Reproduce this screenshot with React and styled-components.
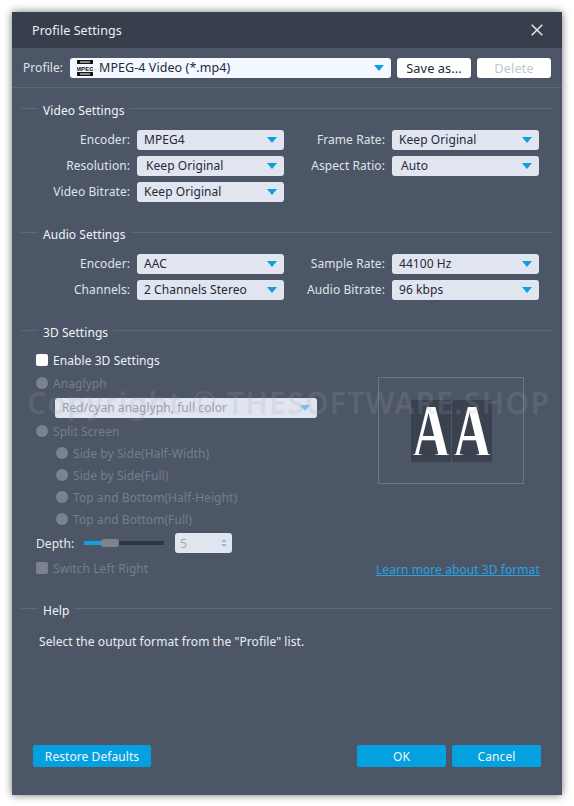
import React from "react";
import styled, { createGlobalStyle } from "styled-components";

const Global = createGlobalStyle`
  html, body { margin: 0; padding: 0; background: #fff; }
  body { font-family: "Noto Sans", Tahoma, sans-serif; font-size: 12px; letter-spacing: 0.07px; }
`;

const Page = styled.div`
  width: 574px; height: 806px; padding: 12px; box-sizing: border-box; position: relative; overflow: hidden;
`;
const Win = styled.div`
  width: 550px; height: 783px; background: #4d5667; color: #e9edf3;
  display: flex; flex-direction: column;
  box-shadow: 0 0 8px rgba(0,0,0,.55);
`;
const TitleBar = styled.div`
  height: 36px; flex: none; background: #373e4c; display: flex; align-items: center; justify-content: space-between;
  padding: 0 20px; font-size: 12.5px; color: #eef1f5;
`;
const CloseBtn = styled.svg`
  width: 12px; height: 12px; display: block; margin-right: -1px;
`;
const ProfileRow = styled.div`
  height: 40px; flex: none; box-sizing: border-box; padding: 10px 11px 0 11px; display: flex; align-items: flex-start;
  border-bottom: 1px solid #5d6676;
`;
const ProfileLabel = styled.div`
  width: 47px; height: 20px; line-height: 20px; color: #dfe3ea;
`;
const Sel = styled.div`
  box-sizing: border-box; height: 20px; width: ${p => p.$w || 147}px; border-radius: 3px;
  background: ${p => p.$bg || "#e1e5f0"}; display: flex; align-items: center;
  padding: 0 7px 0 ${p => p.$pad || 7}px; line-height: 20px;
  flex: none; font-size: ${p => p.$fs || 12}px;
`;
const DisabledSel = styled(Sel)`
  margin: 4px 0 0 19px;
`;
const SelText = styled.span`
  flex: 1; white-space: nowrap; color: ${p => p.$off ? "#9a9fac" : "#23293a"};
`;
const Arrow = styled.i`
  width: 0; height: 0; border-left: 5px solid transparent; border-right: 5px solid transparent;
  border-top: 6px solid ${p => p.$off ? "#74c4ee" : "#0c9fe2"}; flex: none;
`;
const PlainBtn = styled.div`
  width: 74px; height: 20px; margin-left: 6px; border-radius: 3px; background: #fff; font-size: 12.8px;
  color: ${p => p.$off ? "#c3c6cc" : "#23293a"}; text-align: center; line-height: 20px; flex: none;
`;
const FilmIcon = styled.svg`
  width: 16px; height: 16px; margin-right: 6px; flex: none; display: block;
`;
const Legend = styled.div`
  display: flex; align-items: flex-start; height: 20px; margin: ${p => p.$mt}px 9px 0 9px; color: #f0f3f7;
  line-height: 20px;
`;
const LegendRule = styled.span`
  display: block; height: 1px; background: #5f6878; margin-top: 7px;
  ${p => p.$short ? "width: 17px; margin-right: 5px;" : "flex: 1; margin-left: 5px;"}
`;
const FormGrid = styled.div`
  display: grid; grid-template-columns: 116px 147px 108px 147px; row-gap: 6px;
  margin: 9px 0 0 9px; align-items: center;
`;
const FieldLabel = styled.div`
  text-align: right; padding-right: 7px; line-height: 20px; height: 20px; color: #dfe3ea; white-space: nowrap;
`;
const ThreeD = styled.div`
  display: flex; margin-left: 24px; height: 258px;
`;
const LeftCol = styled.div`
  width: 342px; flex: none; display: flex; flex-direction: column;
`;
const OptRow = styled.div`
  display: flex; align-items: center; height: 22px; margin-left: ${p => p.$in ? 20 : 0}px;
  margin-top: ${p => p.$mt || 0}px; color: ${p => p.$off ? "#757d8c" : "#eef1f5"};
`;
const Check = styled.span`
  width: 12px; height: 12px; border-radius: 2px; background: ${p => p.$off ? "#7b8290" : "#fff"}; margin-right: 5px; flex: none;
`;
const Radio = styled.span`
  width: 12px; height: 12px; border-radius: 50%; background: #7b8290; margin-right: 5px; flex: none;
`;
const DepthRow = styled.div`
  display: flex; align-items: center; height: 20px; margin-top: 3px; color: #e6eaef;
`;
const DepthLabel = styled.span`
  width: 48px; flex: none;
`;
const Track = styled.div`
  width: 80px; height: 4px; background: #2f3542; position: relative; flex: none;
`;
const TrackFill = styled.div`
  height: 4px; background: #0fa0e2; width: 20px;
`;
const Thumb = styled.div`
  position: absolute; left: 17px; top: -2px; width: 18px; height: 8px; border-radius: 3px; background: #7d838f;
`;
const Spin = styled.div`
  width: 57px; height: 20px; margin-left: 11px; box-sizing: border-box; background: #e1e5f0; border-radius: 3px;
  display: flex; align-items: center; justify-content: space-between; padding: 0 5px; color: #a2a7b2; flex: none;
`;
const SpinArrows = styled.span`
  display: flex; flex-direction: column; gap: 2px;
`;
const SpinUp = styled.i`
  width: 0; height: 0; border-left: 3px solid transparent; border-right: 3px solid transparent; border-bottom: 3px solid #74c4ee;
`;
const SpinDown = styled.i`
  width: 0; height: 0; border-left: 3px solid transparent; border-right: 3px solid transparent; border-top: 3px solid #74c4ee;
`;
const RightCol = styled.div`
  flex: 1; display: flex; flex-direction: column; align-items: flex-start;
`;
const Preview = styled.div`
  width: 146px; height: 107px; box-sizing: border-box; border: 1px solid #6b7586; margin-top: 34px;
  display: flex; align-items: center; justify-content: center; gap: 1px;
`;
const Tile = styled.div`
  width: 40px; height: 62px; border-radius: 2px; background: #3a414f; overflow: hidden; position: relative;
`;
const TileGlyph = styled.span`
  position: absolute; left: -10px; right: -10px; top: 7px; height: 48px; overflow: hidden; color: #fff; text-align: center;
  font-family: "Liberation Serif", serif; font-size: 80px; font-weight: 700; line-height: 49px; letter-spacing: 0;
  transform: scaleX(.66);
`;
const LearnLink = styled.a`
  margin-top: 78px; margin-left: -2px; color: #26a3e3; text-decoration: underline; white-space: nowrap; line-height: 16px;
`;
const HelpText = styled.div`
  margin: 11px 0 0 27px; color: #eaedf2; line-height: 20px;
`;
const Footer = styled.div`
  margin-top: auto; display: flex; padding: 0 21px 28px; gap: 6px; align-items: center;
`;
const BlueBtn = styled.div`
  height: 22px; line-height: 23px; border-radius: 2px; background: #05a0e0; color: #eef8fd; text-align: center;
  width: ${p => p.$w}px; flex: none; ${p => p.$push ? "margin-right: auto;" : ""}
`;
const Watermark = styled.div`
  position: absolute; left: 27px; top: 382px; font-size: 30px; letter-spacing: 1.28px;
  font-weight: 600; color: rgba(160,165,175,.2); white-space: nowrap; pointer-events: none;
`;

function Field({ label, value, pad }) {
  return (
    <>
      <FieldLabel>{label}</FieldLabel>
      <Sel $pad={pad}><SelText>{value}</SelText><Arrow /></Sel>
    </>
  );
}

export default function App() {
  return (
    <Page>
      <Global />
      <Win>
        <TitleBar>
          <span>Profile Settings</span>
          <CloseBtn viewBox="0 0 12 12"><path d="M.7.7l10.6 10.6M11.3.7L.7 11.3" stroke="#dfe3e8" strokeWidth="1.6" fill="none" /></CloseBtn>
        </TitleBar>
        <ProfileRow>
          <ProfileLabel>Profile:</ProfileLabel>
          <Sel $w={321} $bg="#f4f8ff" $fs={12.5}>
            <FilmIcon viewBox="0 0 16 16">
              <rect x="0" y="0" width="16" height="4" fill="#151515" />
              <rect x="0" y="12" width="16" height="4" fill="#151515" />
              <rect x="3" y="1" width="10" height="2" fill="#8b8b8b" />
              <rect x="3" y="13" width="10" height="2" fill="#8b8b8b" />
              <text x="8" y="10.6" textAnchor="middle" fontSize="6" fontFamily="Liberation Sans" fontWeight="700" fill="#111">MPEG</text>
            </FilmIcon>
            <SelText>MPEG-4 Video (*.mp4)</SelText>
            <Arrow />
          </Sel>
          <PlainBtn>Save as...</PlainBtn>
          <PlainBtn $off>Delete</PlainBtn>
        </ProfileRow>

        <Legend $mt={13}><LegendRule $short />Video Settings<LegendRule /></Legend>
        <FormGrid>
          <Field label="Encoder:" value="MPEG4" />
          <Field label="Frame Rate:" value="Keep Original" />
          <Field label="Resolution:" value="Keep Original" pad={9} />
          <Field label="Aspect Ratio:" value="Auto" pad={9} />
          <Field label="Video Bitrate:" value="Keep Original" />
        </FormGrid>

        <Legend $mt={23}><LegendRule $short />Audio Settings<LegendRule /></Legend>
        <FormGrid>
          <Field label="Encoder:" value="AAC" />
          <Field label="Sample Rate:" value="44100 Hz" />
          <Field label="Channels:" value="2 Channels Stereo" />
          <Field label="Audio Bitrate:" value="96 kbps" />
        </FormGrid>

        <Legend $mt={23}><LegendRule $short />3D Settings<LegendRule /></Legend>
        <ThreeD>
          <LeftCol>
            <OptRow $mt={6}><Check />Enable 3D Settings</OptRow>
            <OptRow $off $mt={1}><Radio />Anaglyph</OptRow>
            <DisabledSel $w={262}>
              <SelText $off>Red/cyan anaglyph, full color</SelText><Arrow $off />
            </DisabledSel>
            <OptRow $off $mt={2}><Radio />Split Screen</OptRow>
            <OptRow $off $in><Radio />Side by Side(Half-Width)</OptRow>
            <OptRow $off $in><Radio />Side by Side(Full)</OptRow>
            <OptRow $off $in><Radio />Top and Bottom(Half-Height)</OptRow>
            <OptRow $off $in><Radio />Top and Bottom(Full)</OptRow>
            <DepthRow>
              <DepthLabel>Depth:</DepthLabel>
              <Track><TrackFill /><Thumb /></Track>
              <Spin>5<SpinArrows><SpinUp /><SpinDown /></SpinArrows></Spin>
            </DepthRow>
            <OptRow $off $mt={4}><Check $off />Switch Left Right</OptRow>
          </LeftCol>
          <RightCol>
            <Preview>
              <Tile><TileGlyph>A</TileGlyph></Tile>
              <Tile><TileGlyph>A</TileGlyph></Tile>
            </Preview>
            <LearnLink>Learn more about 3D format</LearnLink>
          </RightCol>
        </ThreeD>

        <Legend $mt={0}><LegendRule $short />Help<LegendRule /></Legend>
        <HelpText>Select the output format from the "Profile" list.</HelpText>
        <Footer>
          <BlueBtn $w={118} $push>Restore Defaults</BlueBtn>
          <BlueBtn $w={89}>OK</BlueBtn>
          <BlueBtn $w={89}>Cancel</BlueBtn>
        </Footer>
      </Win>
      <Watermark>Copyright © THESOFTWARE.SHOP</Watermark>
    </Page>
  );
}
